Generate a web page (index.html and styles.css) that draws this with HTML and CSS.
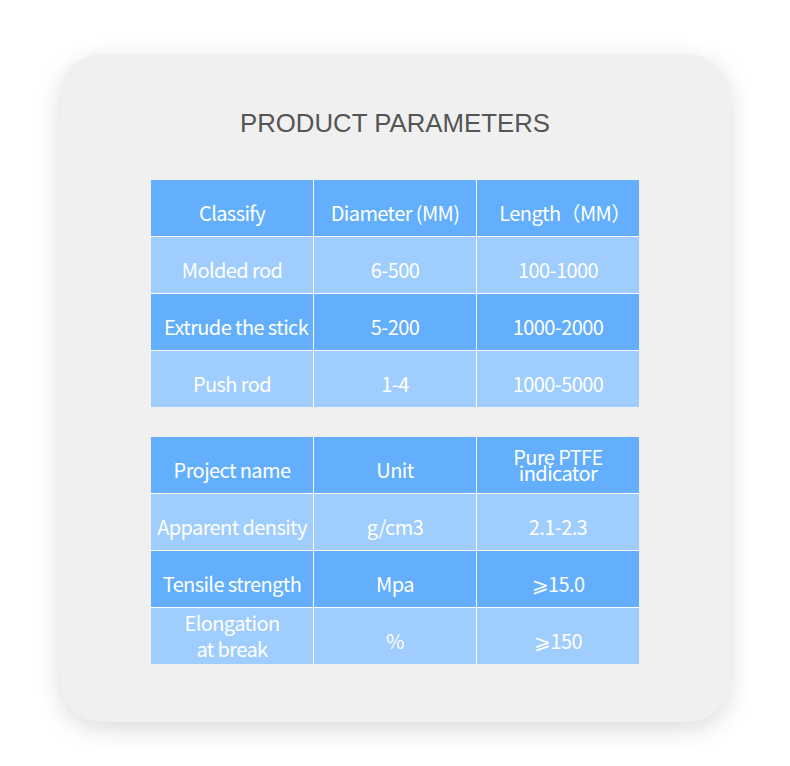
FILE: index.html
```html
<!DOCTYPE html>
<html lang="en">
<head>
<meta charset="utf-8">
<title>Product Parameters</title>
<link rel="stylesheet" href="styles.css">
</head>
<body>
<div class="card">
  <h1 class="title">PRODUCT PARAMETERS</h1>
  <div class="grid first">
    <div class="cell dark">Classify</div>
    <div class="cell dark">Diameter (MM)</div>
    <div class="cell dark shift-lg">Length（MM）</div>
    <div class="cell light">Molded rod</div>
    <div class="cell light">6-500</div>
    <div class="cell light">100-1000</div>
    <div class="cell dark shift">Extrude the stick</div>
    <div class="cell dark">5-200</div>
    <div class="cell dark">1000-2000</div>
    <div class="cell light">Push rod</div>
    <div class="cell light">1-4</div>
    <div class="cell light">1000-5000</div>
  </div>
  <div class="grid second">
    <div class="cell dark">Project name</div>
    <div class="cell dark">Unit</div>
    <div class="cell dark tight"><span class="ln">Pure PTFE</span><span class="ln">indicator</span></div>
    <div class="cell light">Apparent density</div>
    <div class="cell light">g/cm3</div>
    <div class="cell light">2.1-2.3</div>
    <div class="cell dark">Tensile strength</div>
    <div class="cell dark">Mpa</div>
    <div class="cell dark">⩾15.0</div>
    <div class="cell light multi"><span class="ln">Elongation</span><span class="ln">at break</span></div>
    <div class="cell light">%</div>
    <div class="cell light">⩾150</div>
  </div>
</div>
</body>
</html>
```

FILE: styles.css
```css
html, body {
  margin: 0;
  padding: 0;
  background: #ffffff;
}

body {
  width: 790px;
  height: 766px;
  overflow: hidden;
}

.card {
  box-sizing: border-box;
  margin: 54px 0 0 60px;
  width: 670px;
  height: 668px;
  background: #f0f0f0;
  border-radius: 42px;
  box-shadow: 0 7px 24px rgba(0, 0, 0, 0.14);
  padding-top: 54px;
  display: flex;
  flex-direction: column;
  align-items: center;
}

.title {
  margin: 0;
  font-family: "Liberation Sans", Arial, sans-serif;
  font-weight: normal;
  font-size: 25.8px;
  line-height: 30px;
  color: #555555;
}

.grid {
  display: grid;
  grid-template-columns: repeat(3, 162px);
  grid-auto-rows: 56px;
  gap: 1px;
  background: #ffffff;
}

.grid.first {
  margin-top: 42px;
}

.grid.second {
  margin-top: 30px;
}

.cell {
  box-sizing: border-box;
  display: flex;
  flex-direction: column;
  align-items: center;
  justify-content: center;
  text-align: center;
  padding-top: 9px;
  font-family: "Noto Sans CJK SC", "Noto Sans", sans-serif;
  font-size: 20px;
  line-height: 26px;
  letter-spacing: -0.6px;
  color: #ffffff;
  white-space: nowrap;
}

.ln {
  display: block;
}

.dark {
  background: #63affd;
}

.light {
  background: #9fcdfd;
}

.cell.shift {
  padding-left: 8px;
}

.cell.shift-lg {
  padding-left: 14px;
}

.cell.tight {
  padding-top: 0;
  padding-bottom: 1px;
  line-height: 16px;
}

.cell.multi {
  padding-top: 0;
  line-height: 26px;
}
```
